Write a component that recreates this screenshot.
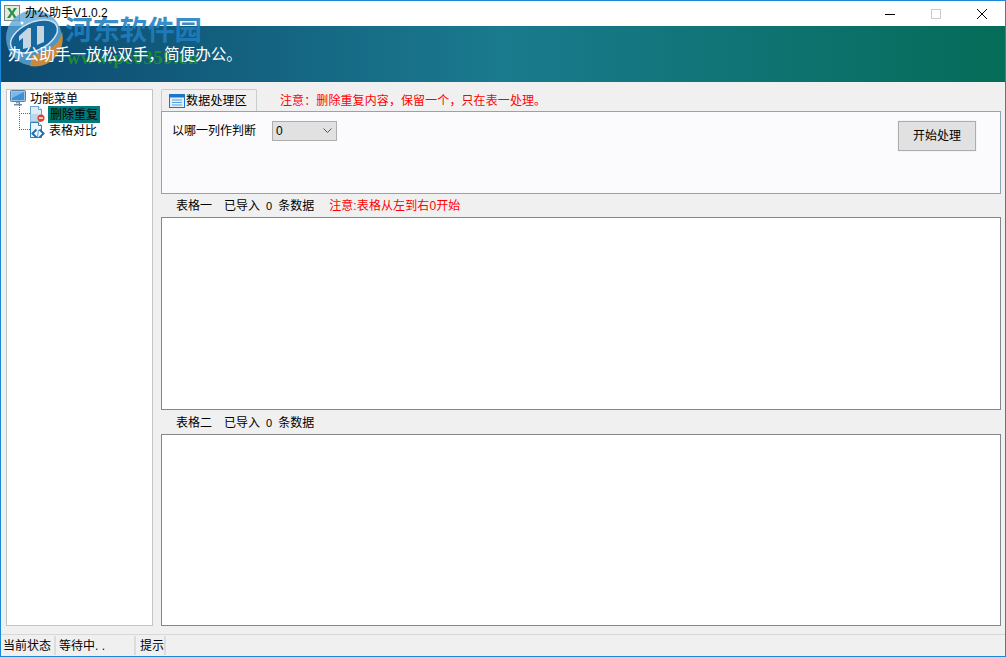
<script>
	const cjk = '"Noto Sans CJK SC"';
</script>

<div class="window">
	<header class="titlebar">
		<svg class="xl" viewBox="0 0 16 16" width="16" height="16">
			<rect x="0.500" y="0.500" width="15" height="15" fill="#e4ece2" stroke="#78897c" />
			<path d="M3 3h3l2 3.400L10 3h3l-3.500 5L13 13h-3L8 9.600 6 13H3l3.500-5z" fill="#2a9148" />
		</svg>
		<span class="title">办公助手V1.0.2</span>
		<div class="controls">
			<span class="ctl"><svg width="10" height="10" viewBox="0 0 10 10"><path d="M0 5.500h10" stroke="#000" /></svg></span>
			<span class="ctl"><svg width="10" height="10" viewBox="0 0 10 10"><rect x=".5" y=".5" width="9" height="9" fill="none" stroke="#ccc" /></svg></span>
			<span class="ctl"><svg width="10" height="10" viewBox="0 0 10 10"><path d="M0 0l10 10M10 0L0 10" stroke="#000" /></svg></span>
		</div>
	</header>

	<div class="banner"><span>办公助手一放松双手，简便办公。</span></div>

	<main class="body">
		<aside class="tree">
			<div class="node root">
				<svg width="16" height="16" viewBox="0 0 16 16">
					<rect x="0.500" y="0.500" width="15" height="11" rx="1" fill="#9fc4e4" stroke="#5f7f9f" />
					<rect x="2" y="2" width="12" height="8" fill="#3f8fd6" />
					<path d="M2 2h12L2 8z" fill="#7db8ea" />
					<path d="M6 12h4v1.500H6z" fill="#8fa4b6" />
					<path d="M4 14h8v1.500H4z" fill="#6f8aa3" />
				</svg>
				<span class="rootname">功能菜单</span>
			</div>
			<div class="node leaf">
				<svg width="16" height="16" viewBox="0 0 16 16">
					<path d="M1.500.5h8l3 3v12h-11z" fill="#dcebf5" stroke="#6aa4cc" />
					<path d="M9.500.5v3h3" fill="#fff" stroke="#6aa4cc" />
					<path d="M1.500 8h8v7.500h-8z" fill="#b9d6ea" />
					<circle cx="12" cy="12" r="3.500" fill="#e0402c" />
					<path d="M10 12h4" stroke="#fff" stroke-width="1.500" />
				</svg>
				<span class="label picked">删除重复</span>
			</div>
			<div class="node leaf">
				<svg width="16" height="16" viewBox="0 0 16 16">
					<path d="M1.500.5h8l3 3v12h-11z" fill="#eef5fa" stroke="#2f7fb8" />
					<path d="M9.500.5v3h3" fill="#fff" stroke="#2f7fb8" />
					<path d="M7.500 7.500l-4 4 4 4M10.500 7.500l4 4-4 4" fill="#fff" stroke="#1f6fb0" stroke-width="2" />
					<path d="M9.500 8l-1 7" stroke="#5fa0cf" />
				</svg>
				<span class="label plain">表格对比</span>
			</div>
		</aside>

		<section class="work">
			<div class="tabrow">
				<div class="tab">
					<svg width="16" height="14" viewBox="0 0 16 14">
						<rect x=".5" y=".5" width="15" height="13" fill="#dff0fb" stroke="#1c76c8" />
						<path d="M1 1h14v2.500H1z" fill="#1c76c8" />
						<path d="M3 6h10M3 8.500h10M3 11h10" stroke="#5aa2de" />
					</svg>
					<span>数据处理区</span>
				</div>
				<span class="note">注意：删除重复内容，保留一个，只在表一处理。</span>
			</div>
			<div class="options">
				<label class="pick">以哪一列作判断</label>
				<div class="select">
					<span>0</span>
					<svg width="9" height="6" viewBox="0 0 9 6"><path d="M.5.5L4.500 4.500 8.500.5" fill="none" stroke="#555" /></svg>
				</div>
				<button class="start">开始处理</button>
			</div>
			<div class="strip">
				<span class="name">表格一</span><span class="count">已导入</span><span class="zero">0</span><span>条数据</span>
				<span class="warn">注意:表格从左到右0开始</span>
			</div>
			<div class="table first"></div>
			<div class="strip second">
				<span class="name">表格二</span><span class="count">已导入</span><span class="zero">0</span><span>条数据</span>
			</div>
			<div class="table"></div>
		</section>
	</main>

	<footer class="status">
		<span class="cell c1">当前状态</span>
		<span class="cell c2">等待中. .</span>
		<span class="cell c3">提示</span>
	</footer>

	<div class="mark" aria-hidden="true">
		<svg class="logo" width="62" height="64" viewBox="0 0 62 64">
			<circle cx="30" cy="30" r="28" fill="#5ba6d8" opacity="0.8" />
			<path d="M58 24C56 36 44 44 28 48L26 58A28 28 0 0 0 58 24z" fill="#c98a3e" />
			<ellipse cx="30" cy="28.500" rx="25" ry="14" transform="rotate(-25 30 28.500)" fill="#16689f" stroke="#cfe2ef" stroke-width="1.500" />
			<path d="M24 20L15 28v5l4-3v11l8-2V20z" fill="#c6d6e0" />
			<path d="M33 18h7v16l-7 3z" fill="#c6d6e0" />
			<circle cx="18" cy="15" r="1.500" fill="#fff" />
		</svg>
		<span class="cn">河东软件园</span>
		<span class="url">www.pc0359.cn</span>
	</div>
</div>

<style>
	:global(body) {
		margin: 0;
		background: #f0f0f0;
	}

	.window {
		position: relative;
		box-sizing: border-box;
		width: 1006px;
		height: 657px;
		display: flex;
		flex-direction: column;
		border: 1px solid #1a87d8;
		background: #f0f0f0;
		color: #000;
		font: 12px/16px "Liberation Sans", "Noto Sans CJK SC", sans-serif;
		overflow: hidden;
	}

	.titlebar {
		height: 25px;
		flex: none;
		display: flex;
		align-items: center;
		padding-left: 3px;
		background: #fff;
	}

	.xl {
		margin-top: -1px;
	}

	.title {
		position: relative;
		z-index: 2;
		margin-left: 5px;
		font-size: 12px;
		margin-top: -2px;
	}

	.controls {
		margin-left: auto;
		display: flex;
	}

	.ctl {
		width: 46px;
		height: 25px;
		display: flex;
		align-items: center;
		justify-content: center;
	}

	.banner {
		height: 56px;
		flex: none;
		box-sizing: border-box;
		padding: 20px 0 0 7px;
		color: #fff;
		font-size: 15.600px;
		line-height: 18px;
		background: linear-gradient(90deg, #0d4a72 0%, #1a7a8e 50%, #056c58 100%);
	}

	.banner span {
		position: relative;
		z-index: 2;
	}

	.body {
		flex: 1;
		min-height: 0;
		display: flex;
		padding: 7px 4px 8px 5px;
		gap: 8px;
	}

	.tree {
		width: 147px;
		flex: none;
		box-sizing: border-box;
		padding: 0 3px;
		background: #fff;
		border: 1px solid #c4c4c4;
	}

	.node {
		position: relative;
		height: 16px;
		display: flex;
		align-items: center;
		white-space: nowrap;
	}

	.root {
		gap: 4px;
	}

	.rootname {
		padding-top: 2px;
	}

	.leaf {
		margin-left: 19px;
		gap: 3px;
	}

	.leaf::before {
		content: "";
		position: absolute;
		left: -10px;
		top: -7px;
		width: 10px;
		height: 14px;
		border-left: 1px dotted #666;
		border-bottom: 1px dotted #666;
	}

	.label {
		padding: 1px 2px 0;
		line-height: 16px;
	}

	.plain {
		margin-left: -1px;
	}

	.picked {
		background: #007a7a;
	}

	.work {
		flex: 1;
		min-width: 0;
		display: flex;
		flex-direction: column;
	}

	.tabrow {
		height: 22px;
		flex: none;
		display: flex;
		align-items: flex-end;
	}

	.tab {
		box-sizing: border-box;
		width: 96px;
		height: 22px;
		display: flex;
		align-items: center;
		gap: 1px;
		padding: 1px 0 0 7px;
		border: 1px solid #c8cdd0;
		border-bottom: none;
		border-radius: 2px 2px 0 0;
		letter-spacing: 0.2px;
	}

	.note {
		margin-left: 23px;
		height: 20px;
		color: #f00;
		line-height: 20px;
		letter-spacing: 0.1px;
	}

	.options {
		height: 83px;
		flex: none;
		box-sizing: border-box;
		display: flex;
		align-items: flex-start;
		padding: 9px 24px 0 10px;
		background: #fbfbfe;
		border: 1px solid #8ea6b4;
	}

	.pick {
		line-height: 20px;
	}

	.select {
		box-sizing: border-box;
		width: 65px;
		height: 20px;
		margin-left: 16px;
		padding: 0 4px 0 3px;
		display: flex;
		align-items: center;
		justify-content: space-between;
		background: #e1e1e1;
		border: 1px solid #adadad;
	}

	.start {
		box-sizing: border-box;
		width: 78px;
		height: 30px;
		margin: 0 0 0 auto;
		padding: 0;
		background: #e1e1e1;
		border: 1px solid #adadad;
		outline: 1px solid #f4f4f4;
		font: inherit;
		color: #000;
	}

	.strip {
		height: 23px;
		flex: none;
		display: flex;
		align-items: center;
		padding-left: 15px;
		background: #f0f0f0;
	}

	.strip.second {
		height: 24px;
		padding-top: 1px;
		box-sizing: border-box;
	}

	.count {
		margin-left: 12px;
	}

	.zero {
		margin: 0 6px;
		font-size: 11px;
	}

	.warn {
		margin-left: 15px;
		color: #f00;
		letter-spacing: 0.1px;
	}

	.table {
		flex: 1;
		min-height: 0;
		background: #fff;
		border: 1px solid #82878c;
	}

	.table.first {
		flex: none;
		height: 193px;
		box-sizing: border-box;
	}

	.status {
		height: 22px;
		flex: none;
		box-sizing: border-box;
		display: flex;
		align-items: center;
		border-top: 1px solid #d7d7d7;
	}

	.cell {
		box-sizing: border-box;
		height: 19px;
		line-height: 20px;
		border-right: 2px solid #dcdcdc;
		padding-left: 2px;
	}

	.c1 {
		width: 55px;
	}

	.c2 {
		width: 80px;
		padding-left: 3px;
	}

	.c3 {
		width: 30px;
		padding-left: 4px;
	}

	.mark {
		position: absolute;
		left: 3px;
		top: 7px;
		width: 240px;
		height: 64px;
		pointer-events: none;
	}

	.logo {
		position: absolute;
		left: 0;
		top: 0;
	}

	.cn {
		position: absolute;
		left: 61px;
		top: 4px;
		color: #1f7fc0;
		font: bold 27.400px/32px "Noto Sans CJK SC", serif;
		opacity: 0.88;
	}

	.url {
		position: absolute;
		left: 63px;
		top: 40px;
		color: #1c8c34;
		font: bold 18px/20px "Liberation Serif", serif;
		letter-spacing: 1px;
	}
</style>
